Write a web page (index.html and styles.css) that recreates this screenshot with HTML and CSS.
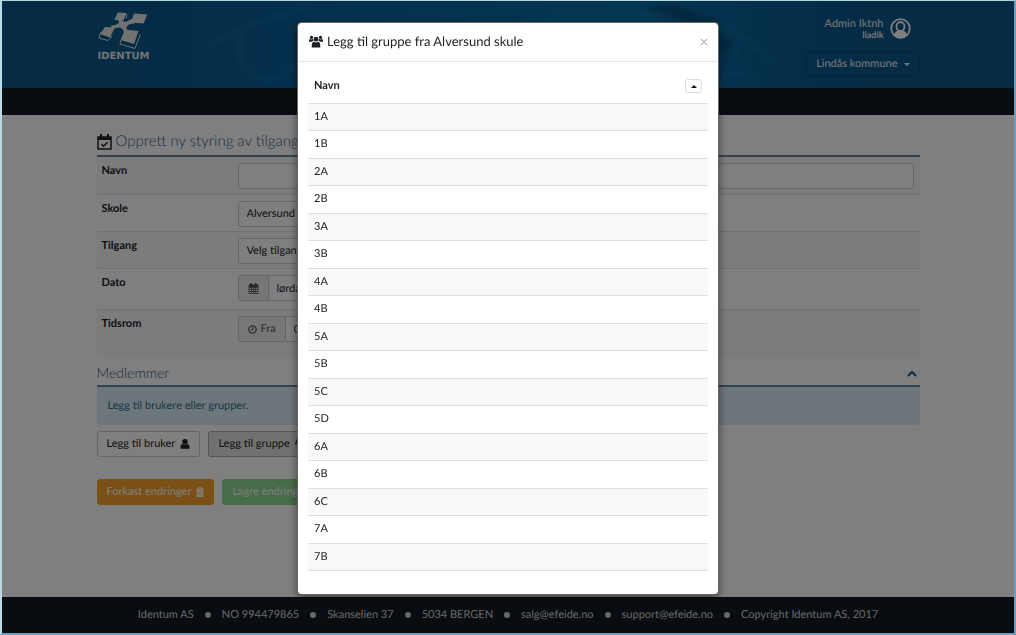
FILE: index.html
```html
<!DOCTYPE html>
<html lang="no">
<head>
<meta charset="utf-8">
<title>Identum – Opprett ny styring av tilgang</title>
<link rel="stylesheet" href="styles.css">
</head>
<body>
<div class="page">
  <header class="banner">
    <svg class="banner-art" viewBox="0 0 1012 87" preserveAspectRatio="xMidYMid slice" aria-hidden="true">
      <defs>
        <linearGradient id="glow" x1="0" x2="1" y1="0" y2="0">
          <stop offset="0.12" stop-color="#0868a8" stop-opacity="0"/>
          <stop offset="0.32" stop-color="#0868a8" stop-opacity=".6"/>
          <stop offset="0.62" stop-color="#0874b0" stop-opacity=".8"/>
          <stop offset="0.86" stop-color="#0868a8" stop-opacity="0"/>
        </linearGradient>
        <filter id="soft"><feGaussianBlur stdDeviation="2.5"/></filter>
      </defs>
      <rect width="1012" height="87" fill="url(#glow)"/>
      <g filter="url(#soft)" fill="none" stroke="#3f9bd0" stroke-opacity=".16" stroke-width="4">
        <path d="M200 50 Q228 30 262 20 T310 0"/>
        <path d="M240 30 Q230 60 254 76 Q276 84 292 64"/>
        <path d="M640 12 Q690 10 716 26 Q740 44 730 62"/>
        <path d="M660 0 Q720 14 770 60"/>
        <path d="M716 80 Q736 60 756 87"/>
      </g>
      <g filter="url(#soft)" fill="#063a60" fill-opacity=".5">
        <path d="M640 8 L670 2 L720 20 L700 24z"/>
        <path d="M716 40 L732 36 L724 56z"/>
      </g>
    </svg>
    <div class="container banner-row">
      <div class="logo">
        <svg width="54" height="38" viewBox="0 0 54 38" aria-hidden="true">
          <path fill="none" stroke="#e4e4e4" d="M4 21l-2 6 9 2.500 4-4.500M24 29l-1 4 15 4.500 5-13-1-1M29 3l1 1-1 3"/>
          <g fill="#e4e4e4">
            <path d="M21 1.500l8.500.5-3 7.500-9-.5q1-3 3.500-7.500z"/>
            <path d="M37 2.500l13.500 1-4 9-12.500-1z"/>
            <path d="M23 8q3 3.500 6.500 2.500t7-4l1 6q-6 0-7.500 3t2 5l-5 3q0-5-3-6.500t-9 1.500l-1-4q6-.5 7.500-2.500t-1.500-3.500z"/>
            <path d="M8 16l10 .5-5 10-10-3.500z"/>
            <path d="M28 18.500l13.500 1.500-4.500 13-13.500-4z"/>
          </g>
        </svg>
        <span class="logo-name">IDENTUM</span>
      </div>
      <div class="account">
        <div class="user">
          <div class="user-names"><span>Admin Iktnh</span><strong>liadik</strong></div>
          <svg width="21" height="21" viewBox="0 0 21 21" aria-hidden="true">
            <circle cx="10.500" cy="10.500" r="9.300" fill="none" stroke="#fff" stroke-width="1.800"/>
            <ellipse cx="10.500" cy="8.500" rx="4" ry="4.500" fill="none" stroke="#fff" stroke-width="1.800"/>
            <path d="M4 17q1-4 4-4.500q2.500 1.500 5 0q3 .5 4 4.500q-6 5-13 0z" fill="#fff"/>
          </svg>
        </div>
        <button class="tenant" type="button">Lindås kommune <span class="caret-down"></span></button>
      </div>
    </div>
  </header>
  <nav class="menubar" aria-label="Hovedmeny"></nav>

  <main class="container content">
    <h1 class="heading">
      <svg width="15" height="16" viewBox="0 0 15 16" aria-hidden="true">
        <path d="M1 3h13v12H1z" fill="none" stroke="#222" stroke-width="1.500"/>
        <path d="M1 3h13v3H1zM3 0h2v4H3zM10 0h2v4h-2z" fill="#222"/>
        <path d="M4.500 10l2 2.200 4-4" fill="none" stroke="#222" stroke-width="1.500"/>
      </svg>
      Opprett ny styring av tilgang
    </h1>
    <form class="fields">
      <div class="field name"><label for="navn">Navn</label><input class="control" id="navn" type="text"></div>
      <div class="field"><label for="skole">Skole</label><select class="control short" id="skole"><option>Alversund skule</option></select></div>
      <div class="field"><label for="tilgang">Tilgang</label><select class="control short" id="tilgang"><option>Velg tilgang</option></select></div>
      <div class="field date"><label for="dato">Dato</label>
        <div class="group"><span class="addon"><svg width="11" height="11" viewBox="0 0 11 11" aria-hidden="true"><path d="M1 2h9v8.500H1z M1 4.500h9M1 6.500h9M1 8.500h9M3.500 4v6M5.500 4v6M7.500 4v6" fill="none" stroke="#555" stroke-width=".8"/><path d="M1 1.500h9v2.500H1zM2.500 0h1.500v2H2.500zM7 0h1.500v2H7z" fill="#555"/></svg></span><input class="control" id="dato" type="text" value="lørdag"></div>
      </div>
      <div class="field time"><label for="fra">Tidsrom</label>
        <div class="group"><span class="addon"><svg width="9" height="9" viewBox="0 0 9 9" aria-hidden="true"><circle cx="4.500" cy="4.500" r="3.700" fill="none" stroke="#555" stroke-width="1.300"/><path d="M4.800 2v3H3" fill="none" stroke="#555"/></svg>Fra</span><input class="control" id="fra" type="text" value="00:00"></div>
      </div>
    </form>
    <section>
      <h2 class="subheading">Medlemmer
        <svg width="10" height="7" viewBox="0 0 10 7" aria-hidden="true"><path d="M1 6l4-4 4 4" fill="none" stroke="#156094" stroke-width="2.200"/></svg>
      </h2>
      <p class="notice">Legg til brukere eller grupper.</p>
      <div class="actions">
        <button class="btn" type="button">Legg til bruker
          <svg width="10" height="10" viewBox="0 0 10 10" aria-hidden="true"><circle cx="5" cy="2.700" r="2.700" fill="#222"/><path d="M.5 9.800V7.500Q.8 5 2.500 5q2.500 1.500 5 0Q9.200 5 9.500 7.500v2.300z" fill="#222"/></svg>
        </button>
        <button class="btn pressed" type="button">Legg til gruppe
          <svg width="12" height="10" viewBox="0 0 14 12" aria-hidden="true"><use href="#people"/></svg>
        </button>
      </div>
      <div class="actions final">
        <button class="btn discard" type="button">Forkast endringer
          <svg width="8" height="10" viewBox="0 0 8 10" aria-hidden="true"><path d="M0 1.500h8v1H0zM2.500 0h3v1.500h-3zM.7 3h6.600v7H.7z" fill="#fff"/><path d="M2.700 4.500v4M4 4.500v4M5.300 4.500v4" stroke="#f6a02c" stroke-width=".6"/></svg>
        </button>
        <button class="btn save" type="button">Lagre endringer</button>
      </div>
    </section>
  </main>

  <footer class="footer">
    <span>Identum AS</span><i></i><span>NO 994479865</span><i></i><span>Skanselien 37</span><i></i><span>5034 BERGEN</span><i></i><a href="mailto:salg@efeide.no">salg@efeide.no</a><i></i><a href="mailto:support@efeide.no">support@efeide.no</a><i></i><span>Copyright Identum AS, 2017</span>
  </footer>

  <div class="backdrop">
    <div class="modal" role="dialog" aria-modal="true" aria-labelledby="modal-title">
      <div class="modal-head">
        <svg width="14" height="13" viewBox="0 0 14 12" aria-hidden="true">
          <g id="people" fill="#1c2026"><circle cx="7" cy="3.700" r="2.400"/><circle cx="2.500" cy="1.900" r="1.600"/><circle cx="11.500" cy="1.900" r="1.600"/><path d="M2.800 12V9Q3.200 6.300 4.800 6.200Q7 7.600 9.200 6.200Q10.800 6.300 11.200 9v3zM0 6.300V4.800Q.3 3.500 1.200 3.500q1.300.8 2.700 0 .2 1.400.8 2-1.500 0-2 .8zM14 6.300V4.800Q13.700 3.500 12.800 3.500q-1.300.8-2.700 0-.2 1.400-.8 2 1.500 0 2 .8z"/></g>
        </svg>
        <h2 id="modal-title">Legg til gruppe fra Alversund skule</h2>
        <button class="close" type="button" aria-label="Lukk"><svg width="8" height="8" viewBox="0 0 8 8" aria-hidden="true"><path d="M1 1l6 6M7 1l-6 6" stroke="#bbb" stroke-width="1.200"/></svg></button>
      </div>
      <div class="modal-body">
        <table class="groups">
          <thead><tr><th scope="col"><div class="column-head">Navn<button class="sort" type="button" aria-label="Sorter"><span class="caret-up"></span></button></div></th></tr></thead>
          <tbody>
            <tr><td>1A</td></tr><tr><td>1B</td></tr><tr><td>2A</td></tr><tr><td>2B</td></tr><tr><td>3A</td></tr><tr><td>3B</td></tr><tr><td>4A</td></tr><tr><td>4B</td></tr><tr><td>5A</td></tr><tr><td>5B</td></tr><tr><td>5C</td></tr><tr><td>5D</td></tr><tr><td>6A</td></tr><tr><td>6B</td></tr><tr><td>6C</td></tr><tr><td>7A</td></tr><tr><td>7B</td></tr>
          </tbody>
        </table>
      </div>
    </div>
  </div>
</div>
</body>
</html>
```
FILE: styles.css
```css
* { box-sizing: border-box; }

body {
  margin: 0;
  font: 11px/16px Lato, "Open Sans", sans-serif;
  text-rendering: geometricPrecision;
  color: #222;
  background: #fff;
}

button, input, select {
  font: inherit;
  color: inherit;
  text-rendering: inherit;
}

button { cursor: pointer; }
svg { flex: none; }

.page {
  display: flex;
  flex-direction: column;
  min-height: 100vh;
  border: 1px solid #6c9cc0;
  border-width: 1px 2px 2px;
  border-top-color: #b4d5dc;
  border-left-color: #b9dbe6;
}

.container {
  width: 100%;
  max-width: 823px;
  margin: 0 auto;
}

.banner {
  position: relative;
  height: 87px;
  background: #0a568a;
}

.banner-art {
  position: absolute;
  inset: 0;
  width: 100%;
  height: 100%;
}

.banner-row {
  position: relative;
  display: flex;
  justify-content: space-between;
}

.logo {
  display: flex;
  flex-direction: column;
  align-items: center;
  padding-top: 10px;
  color: #e4e4e4;
}

.logo-name {
  font: bold 10px/16px "DejaVu Sans", sans-serif;
}

.account {
  display: flex;
  flex-direction: column;
  align-items: flex-end;
  gap: 11px;
  padding-top: 16px;
  color: #eee;
}

.user {
  display: flex;
  align-items: center;
  gap: 6px;
  padding-right: 9px;
}

.user-names {
  display: flex;
  flex-direction: column;
  text-align: right;
  line-height: 13px;
}

.user-names strong {
  font-size: 9px;
  font-weight: 700;
  line-height: 10px;
}

.tenant {
  display: flex;
  align-items: center;
  gap: 6px;
  height: 26px;
  padding: 0 9px;
  border: 1px solid #084873;
  border-radius: 3px;
  background: transparent;
}

.caret-down, .caret-up {
  border: 3px solid transparent;
}

.caret-down { border-top-color: currentColor; border-bottom: 0; }
.caret-up { border-bottom-color: #111; border-top: 0; }

.menubar {
  height: 27px;
  background: #131a24;
}

.content {
  flex: 1;
}

.heading, .subheading {
  display: flex;
  align-items: center;
  margin: 0;
  border-bottom: 2px solid #5f87a8;
  color: #2a5c86;
  font-weight: 300;
}

.heading {
  gap: 4px;
  padding: 16px 0 3px;
  font-size: 15px;
  line-height: 21px;
}

.subheading {
  justify-content: space-between;
  padding: 5px 3px 2px 0;
  font-size: 14px;
  line-height: 20px;
}

.field {
  display: grid;
  grid-template-columns: 136px 1fr;
  padding: 6px 6px 4px 5px;
}

.field + .field { border-top: 1px solid #e2e2e2; }
.field:nth-child(odd) { background: #f8f8f8; }
.field label { font-weight: 700; }

.field.name { padding-bottom: 5px; }
.field.date { padding-bottom: 8px; }
.field.time { padding-bottom: 16px; }

.control {
  width: 100%;
  height: 26px;
  padding: 0 8px;
  border: 1px solid #ccc;
  border-radius: 3px;
  background: #fff;
}

.control.short { appearance: none; width: 240px; }

.group {
  display: flex;
  width: 240px;
}

.group .control {
  flex: 1;
  min-width: 0;
  border-radius: 0 3px 3px 0;
}

.addon {
  display: flex;
  align-items: center;
  gap: 4px;
  padding: 0 9px;
  border: 1px solid #ccc;
  border-right: 0;
  border-radius: 3px 0 0 3px;
  background: #eee;
  color: #555;
}

.notice {
  margin: 0;
  padding: 11px;
  border-radius: 0 0 3px 3px;
  background: #d9edf7;
  color: #31708f;
}

.actions {
  display: flex;
  gap: 8px;
  padding-top: 6px;
}

.actions.final { padding-top: 22px; }

.btn {
  display: flex;
  align-items: center;
  gap: 5px;
  height: 26px;
  padding: 0 9px;
  border: 1px solid #ccc;
  border-radius: 3px;
  background: #fff;
  white-space: nowrap;
}

.pressed { border-color: #adadad; background: #e2e2e2; }
.discard { border-color: #f6a02c; background: #f6a02c; color: #fff; }
.save { border-color: #8ed892; background: #8ed892; color: #fff; }

.footer {
  display: flex;
  align-items: center;
  justify-content: center;
  gap: 11px;
  height: 36px;
  background: #131a24;
  color: #d0d0d0;
}

.footer a { color: inherit; text-decoration: none; }

.footer i {
  width: 6px;
  height: 6px;
  border-radius: 50%;
  background: #d0d0d0;
}

.backdrop {
  position: fixed;
  inset: 1px 2px 2px;
  display: flex;
  justify-content: center;
  align-items: flex-start;
  padding-top: 21px;
  background: rgba(0, 0, 0, .5);
}

.modal {
  width: 100%;
  max-width: 422px;
  border: 1px solid #666;
  border-radius: 4px;
  background: #fff;
  background-clip: padding-box;
  box-shadow: 0 3px 9px rgba(0, 0, 0, .5);
}

.modal-head {
  display: flex;
  align-items: center;
  gap: 4px;
  padding: 9px 10px 10px 11px;
  border-bottom: 1px solid #e5e5e5;
}

.modal-head h2 {
  flex: 1;
  margin: 0;
  font-size: 13px;
  font-weight: 400;
  line-height: 19px;
}

.close {
  display: flex;
  padding: 0;
  border: 0;
  background: none;
}

.modal-body { padding: 8px 10px 23px; }

.groups {
  width: 100%;
  border-collapse: separate;
  border-spacing: 0;
}

.groups th {
  padding: 8px 6px 9px;
  text-align: left;
}

.column-head {
  display: flex;
  align-items: center;
  justify-content: space-between;
}

.groups td {
  padding: 5px 6px;
  border-top: 1px solid #ddd;
}

.groups tr:nth-child(even) td { padding-bottom: 6px; }
.groups tbody tr:nth-child(odd) { background: #f9f9f9; }
.groups tbody tr:last-child td { border-bottom: 1px solid #ddd; }

.sort {
  display: flex;
  align-items: center;
  justify-content: center;
  width: 17px;
  height: 14px;
  padding: 0;
  border: 1px solid #ddd;
  border-radius: 3px;
  background: #fff;
}
```
